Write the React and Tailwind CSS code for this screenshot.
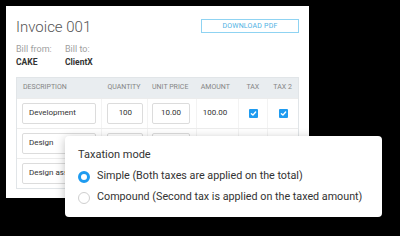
import React from 'react';

const cols = [
    { label: 'Description', w: 'w-[85px]', align: 'justify-start pl-[6px]' },
    { label: 'Quantity', w: 'w-[46px]', align: 'justify-start pl-[6px]' },
    { label: 'Unit price', w: 'w-[49px]', align: 'justify-start pl-[5px]' },
    { label: 'Amount', w: 'w-[43px]', align: 'justify-start pl-[5px]' },
    { label: 'Tax', w: 'w-[29px]', align: 'justify-center' },
    { label: 'Tax 2', w: 'w-[31px]', align: 'justify-center' },
];

// rows 2 and 3 sit mostly under the popover, only the description shows
const rows = [
    { desc: 'Development', qty: '100', price: '10.00', amount: '100.00' },
    { desc: 'Design', qty: '', price: '', amount: '' },
    { desc: 'Design assets', qty: '', price: '', amount: '' },
];

const Checkbox = () => (
    <span className="w-[9px] h-[9px] bg-[#1e9bf0] rounded-[1px] flex items-center justify-center">
        <svg width="7" height="7" viewBox="0 0 10 10" fill="none" stroke="white" strokeWidth="2" strokeLinecap="round" strokeLinejoin="round">
            <path d="M2 5.2 L4.2 7.3 L8 2.8" />
        </svg>
    </span>
);

const Input = ({ value, className }) => (
    <div className={`h-[21px] border border-[#dcdcdc] rounded-[2px] flex items-center text-[8px] text-[#333] ${className}`}>
        {value}
    </div>
);

const Radio = ({ checked }) => (
    checked ? (
        <span className="w-[12px] h-[12px] rounded-full border-[3px] border-[#1e9bf0] bg-white flex-shrink-0" />
    ) : (
        <span className="w-[12px] h-[12px] rounded-full border border-[#cfcfcf] bg-white flex-shrink-0" />
    )
);

export default function App() {
    return (
        <div className="relative w-[400px] h-[236px] bg-black overflow-hidden font-['Roboto',sans-serif] pt-[6px] pl-[6px]">
            {/* Invoice card */}
            <div className="w-[303px] h-[192px] bg-white pt-[13px] px-[10px]">
                <div className="flex justify-between items-start">
                    <h1 className="text-[15px] leading-[16px] font-light text-[#555]">Invoice 001</h1>
                    <button className="w-[98px] h-[14px] border border-[#8fd3f2] text-[#4fb2e3] text-[7px] tracking-[0.2px] uppercase flex items-center justify-center">
                        Download PDF
                    </button>
                </div>

                <div className="flex mt-[10px]">
                    <div className="w-[49px]">
                        <div className="text-[9px] leading-none text-[#a0a0a0]">Bill from:</div>
                        <div className="text-[8.5px] leading-none font-bold text-[#333] mt-[4px]">CAKE</div>
                    </div>
                    <div>
                        <div className="text-[9px] leading-none text-[#a0a0a0]">Bill to:</div>
                        <div className="text-[8.5px] leading-none font-bold text-[#333] mt-[4px]">ClientX</div>
                    </div>
                </div>

                {/* Items table */}
                <div className="mt-[10px] w-[283px] border border-[#e1e5e8]">
                    <div className="flex h-[20px] bg-[#e9edf0]">
                        {cols.map((c) => (
                            <div key={c.label} className={`${c.w} flex items-center ${c.align} text-[7px] uppercase text-[#858585]`}>
                                {c.label}
                            </div>
                        ))}
                    </div>
                    {rows.map((r) => (
                        <div key={r.desc} className="flex h-[30px] border-t border-[#ececec]">
                            <div className="w-[85px] flex items-center pl-[5px]">
                                <Input value={r.desc} className="w-[74px] pl-[6px]" />
                            </div>
                            <div className="w-[46px] flex items-center pl-[5px] border-l border-[#f3f3f3]">
                                <Input value={r.qty} className="w-[36px] justify-center" />
                            </div>
                            <div className="w-[49px] flex items-center pl-[4px] border-l border-[#f3f3f3]">
                                <Input value={r.price} className="w-[38px] justify-center" />
                            </div>
                            <div className="w-[43px] flex items-center pl-[6px] text-[8px] text-[#333] border-l border-[#f3f3f3]">
                                {r.amount}
                            </div>
                            <div className="w-[29px] flex items-center justify-center border-l border-[#f3f3f3]">
                                <Checkbox />
                            </div>
                            <div className="w-[31px] flex items-center justify-center border-l border-[#f3f3f3]">
                                <Checkbox />
                            </div>
                        </div>
                    ))}
                </div>
            </div>

            {/* Taxation mode popover */}
            <div className="absolute left-[65px] top-[136px] w-[317px] h-[81px] bg-white rounded-[4px] shadow-[0_2px_10px_rgba(0,0,0,0.25)] pt-[13px] pl-[13px]">
                <div className="text-[11px] leading-none text-[#333]">Taxation mode</div>
                <div className="mt-[6px]">
                    <div className="flex items-center gap-[7px] h-[21px]">
                        <Radio checked />
                        <span className="text-[10.75px] text-[#333]">Simple (Both taxes are applied on the total)</span>
                    </div>
                    <div className="flex items-center gap-[7px] h-[21px]">
                        <Radio />
                        <span className="text-[10.75px] text-[#333]">Compound (Second tax is applied on the taxed amount)</span>
                    </div>
                </div>
            </div>
        </div>
    );
}
